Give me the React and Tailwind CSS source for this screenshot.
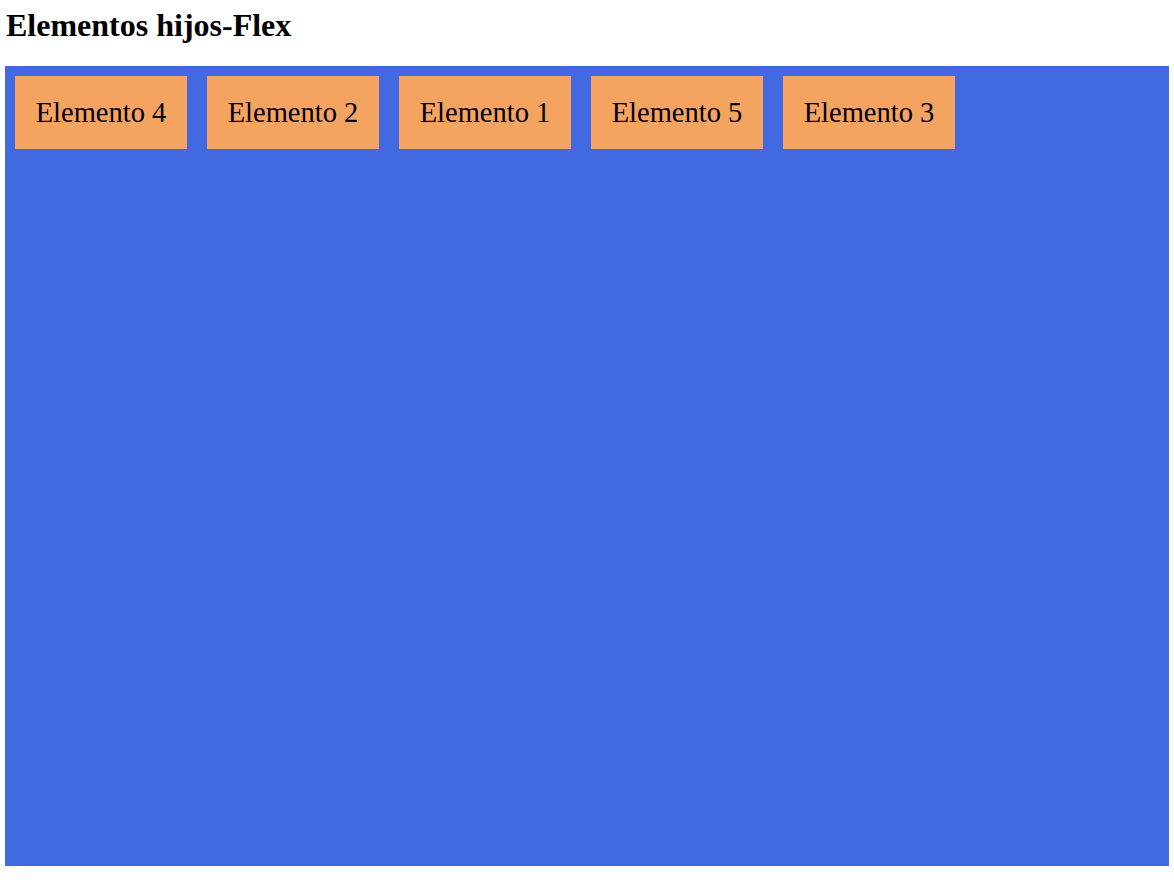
export default function App() {
  const items = ["Elemento 4", "Elemento 2", "Elemento 1", "Elemento 5", "Elemento 3"];
  return (
    <div className="p-[5px] bg-white" style={{ fontFamily: '"Liberation Serif", "Times New Roman", serif' }}>
      <h1 className="text-[32px] font-bold leading-[37px] mt-[2px] mb-[22px] pl-[1px] text-black">
        Elementos hijos-Flex
      </h1>
      <div className="flex flex-row items-start h-[800px] bg-[#4169e1]">
        {items.map((t) => (
          <div
            key={t}
            className="m-[10px] w-[172px] h-[73px] flex items-center justify-center bg-[#f4a460] text-[28.5px] leading-[31px] text-black"
          >
            {t}
          </div>
        ))}
      </div>
    </div>
  );
}
